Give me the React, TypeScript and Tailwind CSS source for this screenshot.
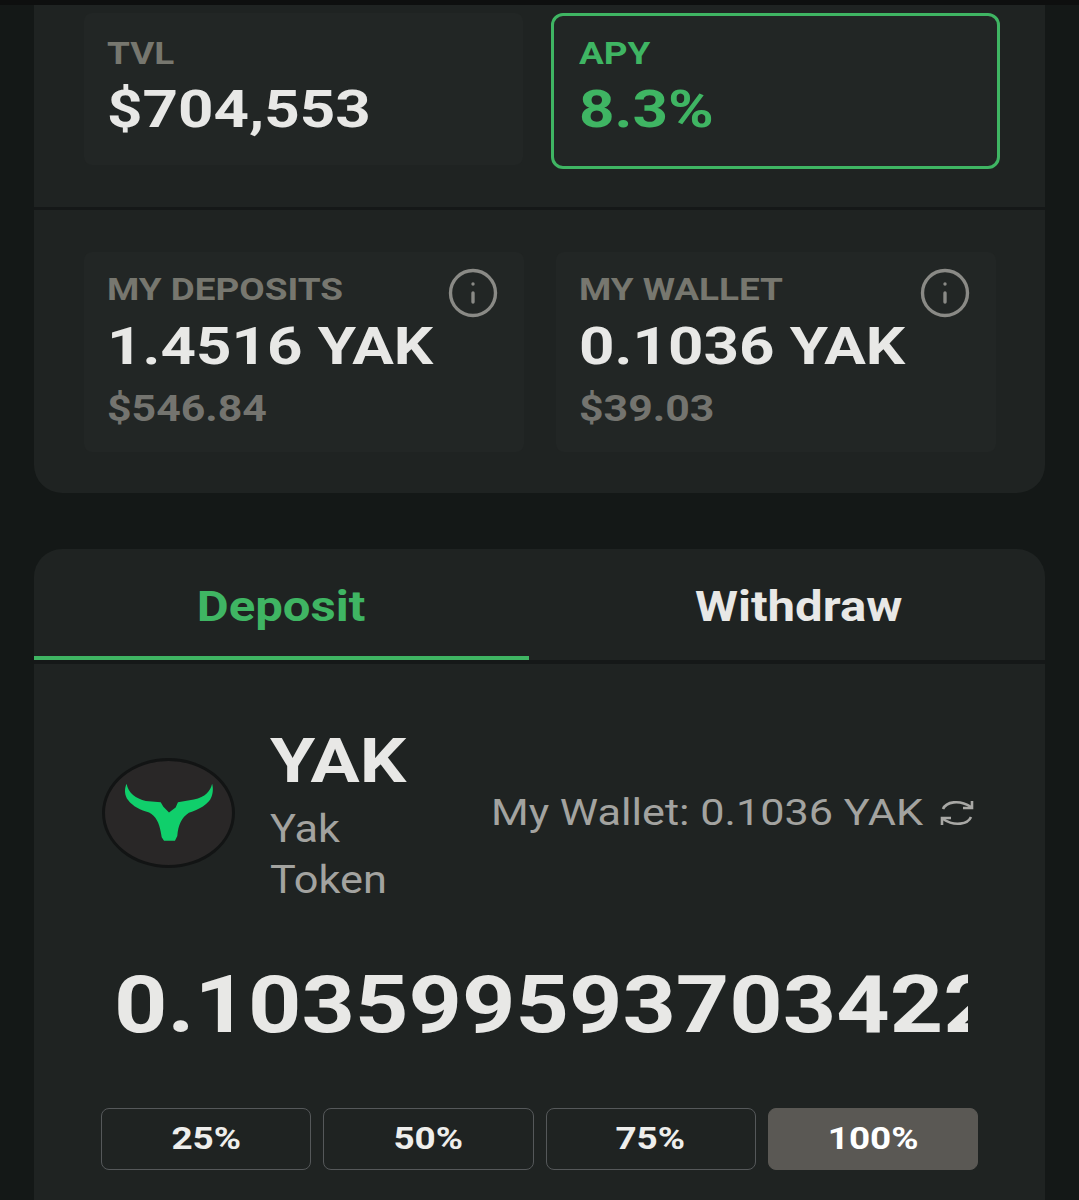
import React from 'react';
import { Info } from 'lucide-react';

const BullLogo = () => (
  <div className="-mt-[5px] flex h-[110px] w-[133px] shrink-0 items-center justify-center rounded-[50%] border-[3px] border-[#121414] bg-[#292727]">
    <svg width="90" height="58" viewBox="130 198 270 175" className="-mt-[2px]">
      <path
        fill="#10cf6b"
        d="M137 200 C130 215 130 235 142 250 C155 268 180 280 205 287 C225 297 236 320 240 345 L243 362 L250 372 L283 372 L290 358 C293 325 303 302 325 288 C355 278 385 262 393 240 C399 225 398 210 395 200 C390 222 375 240 340 248 L292 256 L285 272 L265 287 L248 270 L240 256 L195 252 C165 245 142 228 137 200 Z"
      />
    </svg>
  </div>
);

const RefreshIcon = () => (
  <svg width="36" height="30" viewBox="0 0 36 30" fill="none" stroke="#a8a8a5" strokeWidth="2.6" className="shrink-0">
    <path d="M4 11 C7 4 20 1 32 9" />
    <path d="M24 10 L33 10 L33 3" />
    <path d="M32 19 C29 26 16 29 4 21" />
    <path d="M12 20 L3 20 L3 27" />
  </svg>
);

const StatCard = ({ label, value, sub }: { label: string; value: string; sub: string }) => (
  <div className="relative h-[200px] flex-1 rounded-lg bg-[#222625] pl-[23px] pt-[19px]">
    <div className="origin-left scale-x-[1.19] text-[31px] leading-[38px] font-bold text-[#77776f]">{label}</div>
    <div className="mt-[8px] origin-left scale-x-[1.19] text-[52px] leading-[60px] font-bold text-[#e8e8e6]">{value}</div>
    <div className="mt-[10px] origin-left scale-x-[1.19] text-[36px] leading-[44px] font-bold text-[#74746f]">{sub}</div>
    <Info size={54} strokeWidth={1.5} className="absolute right-[24px] top-[14px] text-[#8a8a86]" />
  </div>
);

const PercentButton = ({ label, active }: { label: string; active?: boolean }) => (
  <button
    className={`h-[62px] flex-1 rounded-lg border text-[31px] font-bold ${
      active ? 'border-[#5a5854] bg-[#5a5854] text-white' : 'border-[#55585a] text-[#eeeeec]'
    }`}
  >
    <span className="inline-block scale-x-[1.19]">{label}</span>
  </button>
);

export default function App() {
  return (
    <div className="h-[1200px] overflow-hidden bg-[#141817] font-['Roboto','Liberation_Sans',sans-serif]">
      <div className="h-[5px] bg-[#0e0f0f]" />

      <div className="mx-[34px] rounded-b-[28px] bg-[#1f2322]">
        <div className="flex h-[205px] gap-[28px] border-b-[3px] border-[#151818] pl-[50px] pr-[45px] pt-[8px]">
          <div className="h-[152px] flex-1 rounded-lg bg-[#222625] pl-[23px] pt-[22px]">
            <div className="origin-left scale-x-[1.19] text-[31px] leading-[38px] font-bold text-[#77776f]">TVL</div>
            <div className="mt-[7px] origin-left scale-x-[1.19] text-[52px] leading-[60px] font-bold text-[#e8e8e6]">$704,553</div>
          </div>
          <div className="h-[156px] w-[449px] rounded-xl border-[3px] border-[#3fb563] bg-[#222625] pl-[25px] pt-[19px]">
            <div className="origin-left scale-x-[1.19] text-[31px] leading-[38px] font-bold text-[#3fb563]">APY</div>
            <div className="mt-[7px] origin-left scale-x-[1.19] text-[52px] leading-[60px] font-bold text-[#3fb563]">8.3%</div>
          </div>
        </div>
        <div className="flex gap-[32px] pb-[41px] pl-[50px] pr-[49px] pt-[42px]">
          <StatCard label="MY DEPOSITS" value="1.4516 YAK" sub="$546.84" />
          <StatCard label="MY WALLET" value="0.1036 YAK" sub="$39.03" />
        </div>
      </div>

      <div className="mx-[34px] mt-[56px] h-[680px] rounded-t-[28px] bg-[#1f2322]">
        <div className="flex h-[115px] border-b-[4px] border-[#151818]">
          <div className="relative flex h-[111px] w-[495px] items-center justify-center pt-[4px] text-[#3fb563]">
            <span className="scale-x-[1.17] text-[42px] font-bold">Deposit</span>
            <div className="absolute bottom-0 left-0 h-[4px] w-full bg-[#3fb563]" />
          </div>
          <div className="flex h-[111px] flex-1 items-center justify-center pl-[24px] pt-[4px] text-[#e8e8e6]">
            <span className="scale-x-[1.17] text-[42px] font-bold">Withdraw</span>
          </div>
        </div>

        <div className="flex items-center pl-[68px] pr-[70px] pt-[61px]">
          <BullLogo />
          <div className="ml-[35px] w-[180px]">
            <div className="origin-left scale-x-[1.18] text-[62px] leading-[72px] font-bold text-[#e8e8e6]">YAK</div>
            <div className="mt-[7px] origin-left scale-x-[1.14] text-[38px] leading-[51px] text-[#a3a3a0]">
              Yak
              <br />
              Token
            </div>
          </div>
          <div className="-mt-[6px] flex flex-1 items-center justify-end gap-[16px] text-[36px] text-[#a3a3a0]">
            <span className="origin-right scale-x-[1.2] whitespace-nowrap">My Wallet: 0.1036 YAK</span>
            <RefreshIcon />
          </div>
        </div>

        <div className="ml-[80px] mt-[49px] w-[854px] overflow-hidden text-[79px] leading-[100px] font-bold text-[#e8e8e6]">
          <div className="origin-left scale-x-[1.18] whitespace-nowrap">0.1035995937034229</div>
        </div>

        <div className="mt-[53px] flex gap-[12px] pl-[67px] pr-[67px]">
          <PercentButton label="25%" />
          <PercentButton label="50%" />
          <PercentButton label="75%" />
          <PercentButton label="100%" active />
        </div>
      </div>
    </div>
  );
}
